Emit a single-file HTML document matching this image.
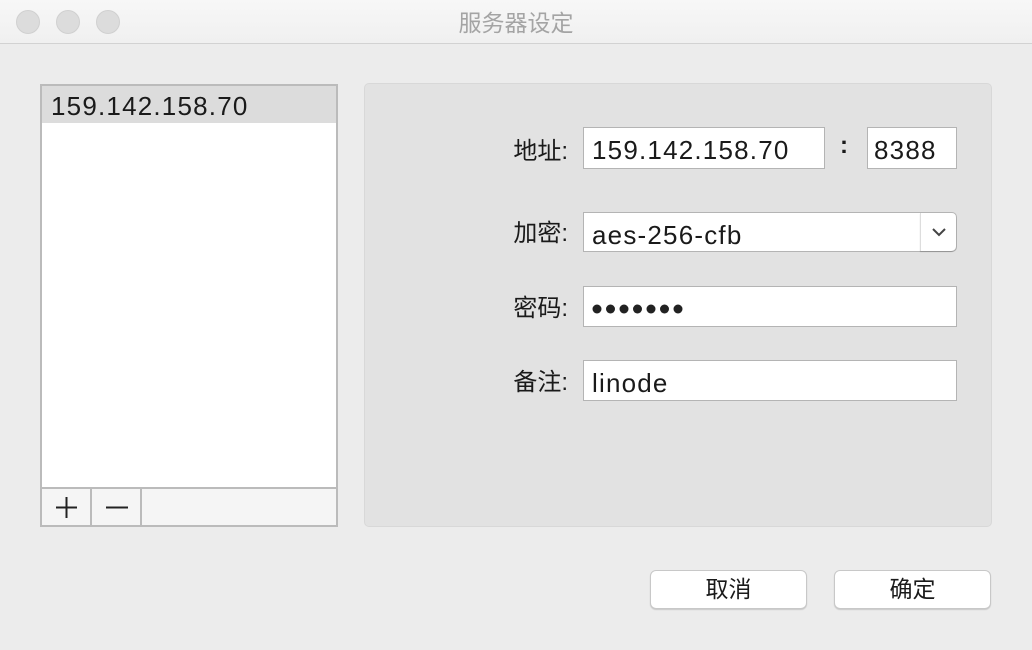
<!DOCTYPE html>
<html><head><meta charset="utf-8"><style>
*{box-sizing:border-box;margin:0;padding:0}
body{width:1032px;height:650px;background:#ececec;font-family:"Liberation Sans","Noto Sans CJK SC",sans-serif;position:relative;overflow:hidden;color:#1a1a1a}
.abs{position:absolute}
.tb{left:0;top:0;width:1032px;height:44px;background:linear-gradient(#f7f7f7,#f0f0f0);border-bottom:1px solid #d2d2d2}
.tl{width:24px;height:24px;border-radius:50%;background:#dcdcdc;border:1px solid #d0d0d0;top:10px}
.title{left:0;width:1032px;top:4px;text-align:center;font-size:23px;color:#a4a4a4}
.list{left:40px;top:84px;width:298px;height:443px;background:#fff;border:2px solid #bbb}
.sel{left:0;top:0;width:294px;height:37px;background:#dcdcdc;font-size:26px;letter-spacing:1.2px;padding:5px 0 0 9px}
.bar{left:0;top:401px;width:294px;height:38px;background:#f5f5f5;border-top:2px solid #bbb}
.bb{top:0;height:36px;border-right:2px solid #bbb;width:50px}
.panel{left:364px;top:83px;width:628px;height:444px;background:#e2e2e2;border:1px solid #d8d8d8;border-radius:5px}
.lab{font-size:24px;width:110px;text-align:right;left:458px;line-height:30px}
.f{background:#fff;border:1px solid #b4b4b4;font-size:26px;letter-spacing:1.2px;padding-left:8px}
.btn{top:570px;width:157px;height:39px;background:#fff;border:1px solid #c8c8c8;border-radius:6px;box-shadow:0 1px 1px rgba(0,0,0,.15);font-size:23px;text-align:center;line-height:37px}
</style></head><body>
<div class="abs tb"></div>
<div class="abs tl" style="left:16px"></div>
<div class="abs tl" style="left:56px"></div>
<div class="abs tl" style="left:96px"></div>
<div class="abs title">服务器设定</div>
<div class="abs list">
 <div class="abs sel">159.142.158.70</div>
 <div class="abs bar">
  <div class="abs bb" style="left:0"><svg width="48" height="36"><path d="M14 18.5H35M24.5 8V29" stroke="#222" stroke-width="2"/></svg></div>
  <div class="abs bb" style="left:50px"><svg width="48" height="36"><path d="M14 18.5H36" stroke="#222" stroke-width="2"/></svg></div>
 </div>
</div>
<div class="abs panel"></div>
<div class="abs lab" style="top:137px">地址:</div>
<div class="abs f" style="left:583px;top:127px;width:242px;height:42px;line-height:44px">159.142.158.70</div>
<div class="abs" style="left:840px;top:132px;font-size:24px;font-weight:bold">:</div>
<div class="abs f" style="left:867px;top:127px;width:90px;height:42px;line-height:44px;padding-left:6px">8388</div>
<div class="abs lab" style="top:219px">加密:</div>
<div class="abs f" style="left:583px;top:212px;width:374px;height:40px;line-height:44px;border-radius:0 5px 5px 0">aes-256-cfb</div>
<div class="abs" style="left:920px;top:213px;width:36px;height:38px;border-left:1px solid #ddd;border-radius:0 5px 5px 0;box-shadow:0 1px 1px rgba(0,0,0,.2)">
 <svg width="36" height="38"><path d="M12 16 L18 22 L24 16" fill="none" stroke="#444" stroke-width="2"/></svg>
</div>
<div class="abs lab" style="top:294px">密码:</div>
<div class="abs" style="left:583px;top:286px;width:374px;height:41px;background:#fff;border:1px solid #b4b4b4">
 <svg width="120" height="40"><g fill="#222"><circle cx="13" cy="22" r="4.5"/><circle cx="26.5" cy="22" r="4.5"/><circle cx="40" cy="22" r="4.5"/><circle cx="53.5" cy="22" r="4.5"/><circle cx="67" cy="22" r="4.5"/><circle cx="80.5" cy="22" r="4.5"/><circle cx="94" cy="22" r="4.5"/></g></svg>
</div>
<div class="abs lab" style="top:368px">备注:</div>
<div class="abs f" style="left:583px;top:360px;width:374px;height:41px;line-height:44px">linode</div>
<div class="abs btn" style="left:650px">取消</div>
<div class="abs btn" style="left:834px">确定</div>
</body></html>
